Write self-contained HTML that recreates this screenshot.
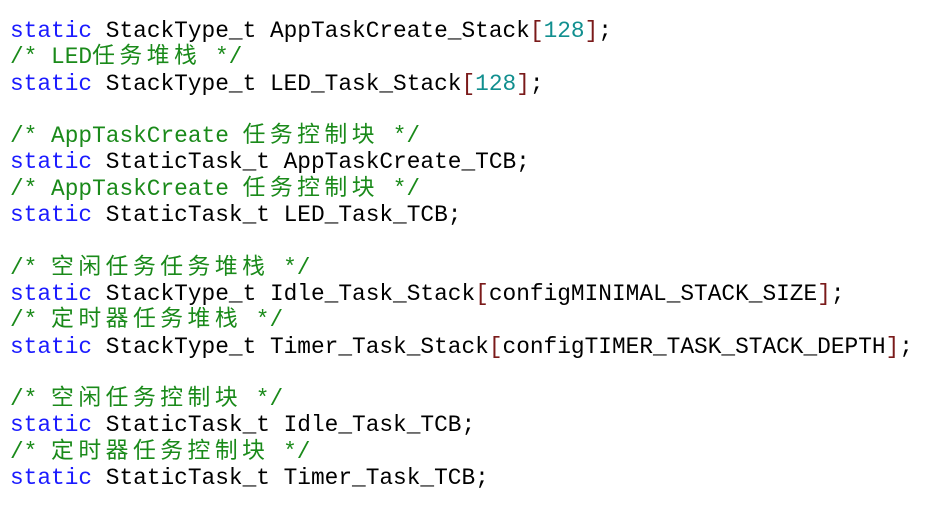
<!DOCTYPE html>
<html><head><meta charset="utf-8"><style>
html,body{margin:0;padding:0;background:#fff;width:935px;height:509px;overflow:hidden}
pre{position:absolute;left:10px;top:18px;margin:0;font-family:"Liberation Mono","Noto Sans CJK SC",monospace;font-size:22.8px;line-height:26.3px;color:#000}
.k{color:#1b1bff}.c{color:#1a8a1a}.n{color:#118f8f}.b{color:#7a1a1a}
.z{letter-spacing:4.5px}
</style></head><body>
<pre><span class="k">static</span> StackType_t AppTaskCreate_Stack<span class="b">[</span><span class="n">128</span><span class="b">]</span>;
<span class="c">/* LED<span class="z">任务堆栈</span> */</span>
<span class="k">static</span> StackType_t LED_Task_Stack<span class="b">[</span><span class="n">128</span><span class="b">]</span>;

<span class="c">/* AppTaskCreate <span class="z">任务控制块</span> */</span>
<span class="k">static</span> StaticTask_t AppTaskCreate_TCB;
<span class="c">/* AppTaskCreate <span class="z">任务控制块</span> */</span>
<span class="k">static</span> StaticTask_t LED_Task_TCB;

<span class="c">/* <span class="z">空闲任务任务堆栈</span> */</span>
<span class="k">static</span> StackType_t Idle_Task_Stack<span class="b">[</span>configMINIMAL_STACK_SIZE<span class="b">]</span>;
<span class="c">/* <span class="z">定时器任务堆栈</span> */</span>
<span class="k">static</span> StackType_t Timer_Task_Stack<span class="b">[</span>configTIMER_TASK_STACK_DEPTH<span class="b">]</span>;

<span class="c">/* <span class="z">空闲任务控制块</span> */</span>
<span class="k">static</span> StaticTask_t Idle_Task_TCB;
<span class="c">/* <span class="z">定时器任务控制块</span> */</span>
<span class="k">static</span> StaticTask_t Timer_Task_TCB;</pre>
</body></html>
